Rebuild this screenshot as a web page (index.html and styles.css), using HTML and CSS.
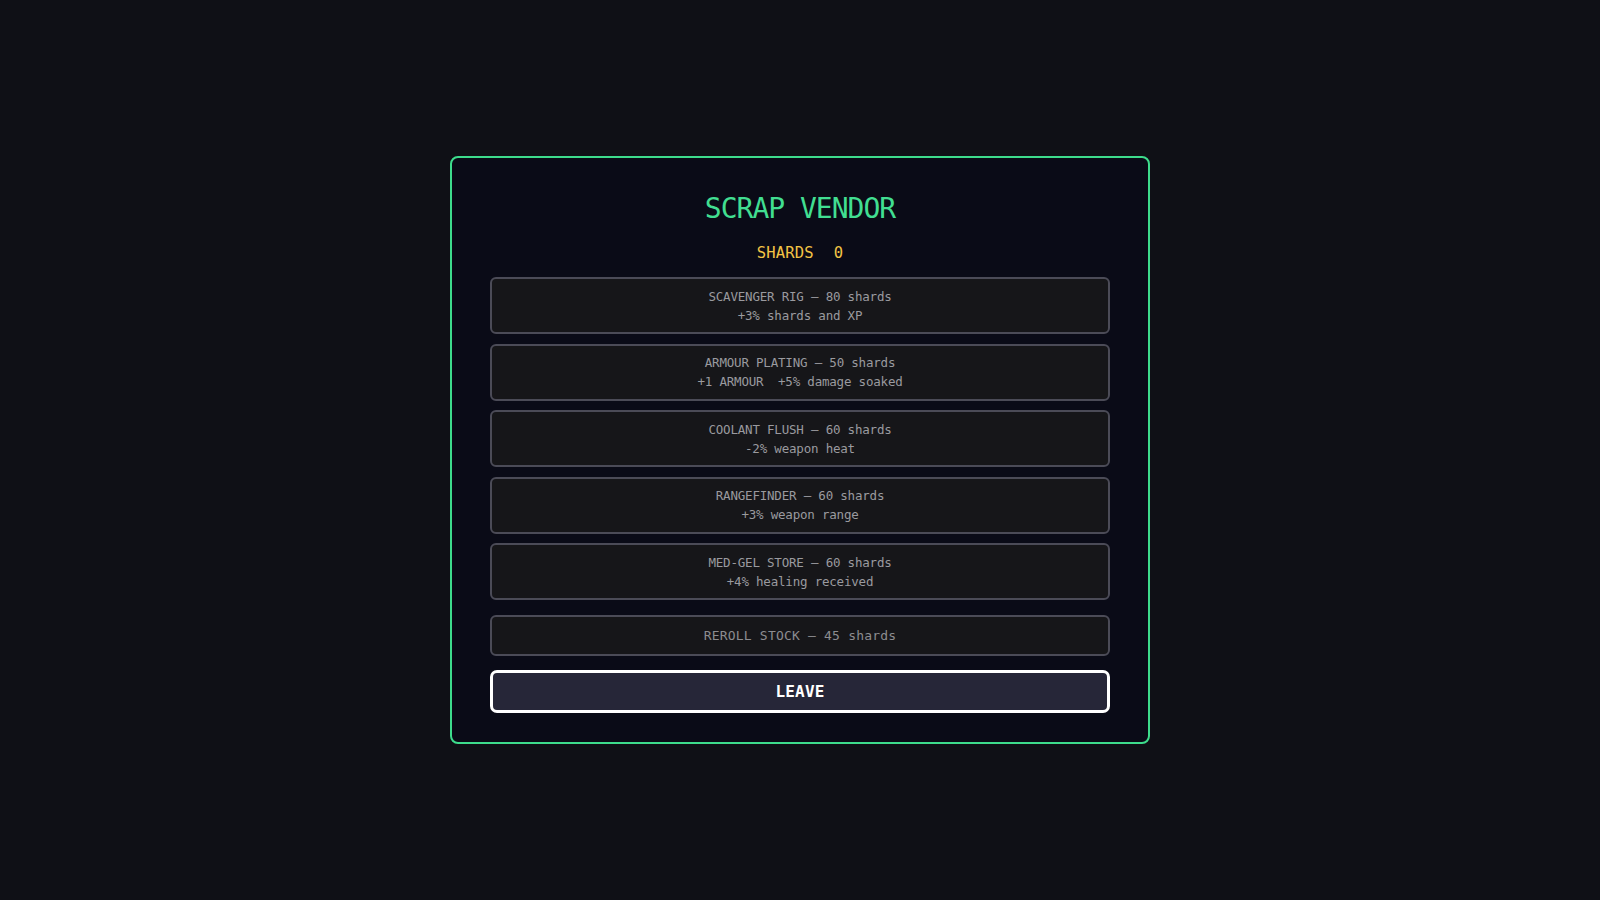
FILE: index.html
```html
<!DOCTYPE html>
<html lang="en">
<head>
  <meta charset="UTF-8" />
  <meta name="viewport" content="width=device-width, initial-scale=1" />
  <title>Scrap Vendor</title>
  <link rel="stylesheet" href="styles.css">
</head>
<body>
  <div class="vendor">
    <!-- Header: shop name and current currency -->
    <h2 class="vendor-title">SCRAP VENDOR</h2>
    <div class="wallet">
      <span>SHARDS</span>
      <span class="wallet-count">0</span>
    </div>

    <!-- Stock for sale -->
    <div class="stock">
      <button class="stock-item" type="button">
        <span>SCAVENGER RIG — 80 shards</span>
        <span>+3% shards and XP</span>
      </button>
      <button class="stock-item" type="button">
        <span>ARMOUR PLATING — 50 shards</span>
        <span>+1 ARMOUR &nbsp;+5% damage soaked</span>
      </button>
      <button class="stock-item" type="button">
        <span>COOLANT FLUSH — 60 shards</span>
        <span>-2% weapon heat</span>
      </button>
      <button class="stock-item" type="button">
        <span>RANGEFINDER — 60 shards</span>
        <span>+3% weapon range</span>
      </button>
      <button class="stock-item" type="button">
        <span>MED-GEL STORE — 60 shards</span>
        <span>+4% healing received</span>
      </button>
    </div>

    <button class="reroll" type="button">REROLL STOCK — 45 shards</button>
    <button class="leave" type="button">LEAVE</button>
  </div>
</body>
</html>
```

FILE: styles.css
```css
/* Base styles */
body {
  display: flex;
  justify-content: center;
  align-items: center;
  min-height: 100vh;
  margin: 0;
  background: #0f1016;
  font-family: "DejaVu Sans Mono", "Liberation Mono", monospace;
}
button {
  font-family: inherit;
  cursor: pointer;
}

/* Vendor panel */
.vendor {
  box-sizing: border-box;
  width: 700px;
  padding: 33px 38px 29px;
  background: #0a0b17;
  border: 2px solid #3ddc8c;
  border-radius: 8px;
  display: flex;
  flex-direction: column;
}
.vendor-title {
  margin: 0;
  text-align: center;
  font-size: 28px;
  line-height: 36px;
  font-weight: normal;
  letter-spacing: -1px;
  color: #41de91;
}
.wallet {
  margin-top: 16px;
  display: flex;
  justify-content: center;
  gap: 20px;
  font-size: 15.5px;
  line-height: 20px;
  letter-spacing: 0.2px;
  color: #f3c445;
}

/* Stock list */
.stock {
  margin-top: 14px;
  display: flex;
  flex-direction: column;
  gap: 9.5px;
}
.stock-item {
  box-sizing: border-box;
  height: 57px;
  display: flex;
  flex-direction: column;
  justify-content: center;
  align-items: center;
  padding: 0;
  background: #161619;
  border: 2px solid #4b4b57;
  border-radius: 6px;
  color: #9a9a9f;
  font-size: 12.5px;
  line-height: 19px;
  letter-spacing: -0.2px;
}
.stock-item:hover {
  border-color: #6a6a78;
}
.reroll {
  box-sizing: border-box;
  height: 41px;
  margin-top: 15px;
  padding: 0;
  background: #161619;
  border: 2px solid #4b4b57;
  border-radius: 6px;
  color: #8c8c90;
  font-size: 13px;
  letter-spacing: 0.2px;
}
.leave {
  box-sizing: border-box;
  height: 43px;
  margin-top: 14px;
  padding: 0;
  background: #262638;
  border: 3px solid #fff;
  border-radius: 7px;
  color: #fff;
  font-size: 16px;
  font-weight: bold;
  letter-spacing: 0.2px;
}
```
